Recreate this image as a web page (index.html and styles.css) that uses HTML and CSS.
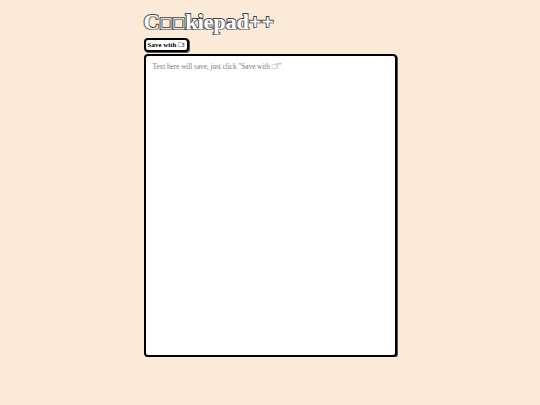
FILE: index.html
```html
<!DOCTYPE html>
<html lang="en">
<head>
    <meta charset="UTF-8">
    <meta name="viewport" content="width=device-width, initial-scale=1.0">
    <title>Cookiepad++</title>
    <link rel="stylesheet" href="styles.css">
</head>
<body>
    <div class="page">
        <h1 class="title">C<span class="tofu">□</span><span class="tofu">□</span>kiepad++</h1>
        <button id="save" class="save-btn">Save with □!</button>
        <textarea id="pad" class="pad" placeholder="Text here will save, just click &quot;Save with □!&quot;"></textarea>
    </div>
</body>
</html>
```

FILE: styles.css
```css
body {
    margin: 0;
    background-color: #faead7;
    font-family: "Liberation Serif", serif;
}

.page {
    width: 253px;
    margin: 0 auto;
    padding-top: 10px;
    display: flex;
    flex-direction: column;
    align-items: flex-start;
}

.title {
    margin: 0;
    height: 24px;
    font-family: "Liberation Serif", serif;
    font-size: 22px;
    line-height: 24px;
    font-weight: bold;
    color: #fff;
    -webkit-text-stroke: 2px #444;
    paint-order: stroke fill;
    text-shadow: 1px 1px 0 #999;
}

.tofu {
    font-size: 18px;
    line-height: 1;
    margin: 0 1px;
}

.save-btn {
    margin-top: 4px;
    padding: 1px 2px;
    font-family: "Liberation Serif", serif;
    font-size: 7px;
    font-weight: bold;
    background: #fff;
    color: #000;
    border: 2px solid #000;
    border-radius: 4px;
    box-shadow: 1px 1px 0 #555;
    cursor: pointer;
}

.pad {
    margin-top: 2px;
    width: 253px;
    height: 303px;
    box-sizing: border-box;
    padding: 7px 7px;
    border: 2px solid #000;
    border-radius: 4px;
    box-shadow: 1px 1px 0 #555;
    font-family: "Liberation Serif", serif;
    font-size: 7.2px;
    resize: none;
    outline: none;
}

.pad::placeholder {
    color: #7a7a7a;
}
```
